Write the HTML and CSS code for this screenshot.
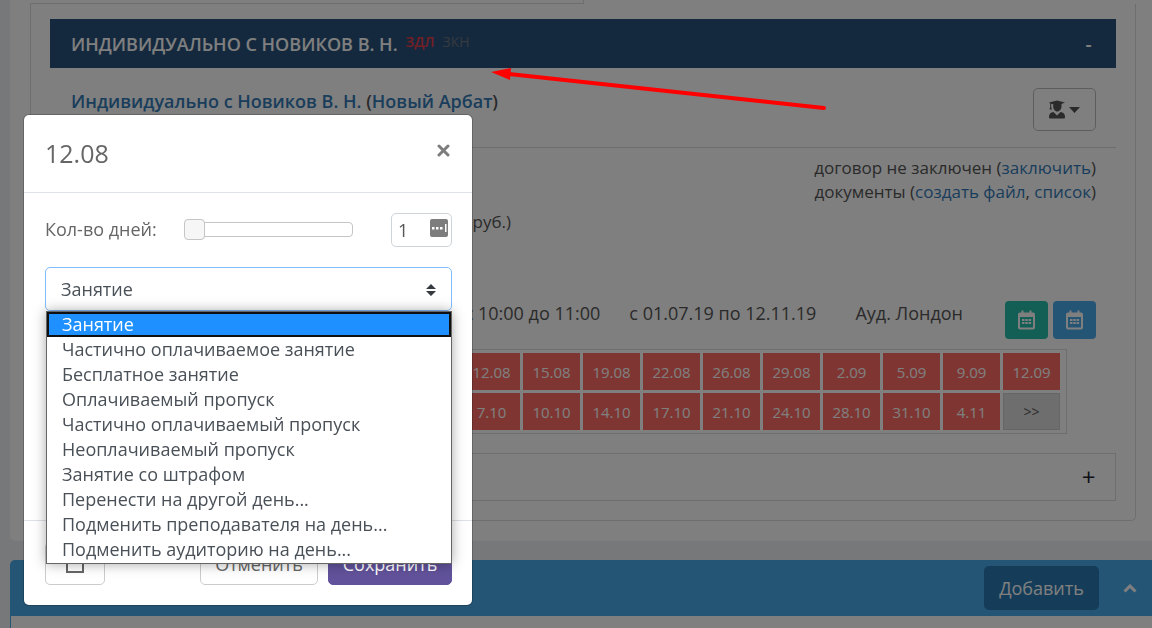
FILE: index.html
```html
<!DOCTYPE html>
<html lang="ru">
<head>
<meta charset="utf-8">
<title>12.08</title>
<link rel="stylesheet" href="styles.css">
</head>
<body>
<main class="sheet">
  <div class="tabs-edge"></div>
  <div class="panel">
    <header class="group-bar">
      <h2 class="group-name">ИНДИВИДУАЛЬНО С НОВИКОВ В. Н.</h2>
      <span class="tag tag-red">ЗДЛ</span>
      <span class="tag tag-gray">ЗКН</span>
      <button class="toggle toggle-light" type="button">-</button>
    </header>
    <section class="group">
      <div class="group-title">
        <h3><a href="#">Индивидуально с Новиков В. Н.</a> (<a href="#">Новый Арбат</a>)</h3>
        <button class="student-btn" type="button" aria-label="Ученик">
          <svg width="16" height="19" viewBox="0 0 16 19"><path d="M8 0.500 L16 2.500 L12.500 4 V6.500 C12.500 9 10.500 11.500 8.300 11.500 C6 11.500 4.200 9 4.200 6.500 V4.200 L2.200 3.700 V7 L2.900 9.500 H.5 L1.200 7 V3.500 L0 2.500 Z M4.500 12 L8 15.500 L11.500 12 C14.500 12.300 16 14.300 16 16.500 V17.500 Q16 18.500 15 18.500 H1 Q0 18.500 0 17.500 V16.500 C0 14.300 1.500 12.300 4.500 12 Z"/></svg>
          <svg width="11" height="6" viewBox="0 0 11 6"><path d="M0 0 H11 L5.500 6 Z"/></svg>
        </button>
      </div>
      <div class="docs">
        <p>договор не заключен (<a href="#">заключить</a>)</p>
        <p>документы (<a href="#">создать файл</a>, <a href="#">список</a>)</p>
      </div>
      <p class="price">руб.)</p>
      <div class="schedule">
        <span>с 10:00 до 11:00</span>
        <span>с 01.07.19 по 12.11.19</span>
        <span class="room">Ауд. Лондон</span>
        <button class="cal cal-green" type="button" aria-label="Календарь группы"><svg width="17" height="20" viewBox="0 0 17 20"><path fill-rule="evenodd" d="M3.500 0.500 H5.500 V2.500 H11.500 V0.500 H13.500 V2.500 H15 Q17 2.500 17 4.500 V17.500 Q17 19.500 15 19.500 H2 Q0 19.500 0 17.500 V4.500 Q0 2.500 2 2.500 H3.500 Z M2 7 V17.500 H15 V7 Z"/><path d="M4 9h2.500v2H4z M7.300 9h2.500v2H7.300z M10.600 9h2.500v2h-2.500z M4 12h2.500v2H4z M7.300 12h2.500v2H7.300z M10.600 12h2.500v2h-2.500z"/></svg></button>
        <button class="cal cal-blue" type="button" aria-label="Календарь ученика"><svg width="17" height="20" viewBox="0 0 17 20"><path fill-rule="evenodd" d="M3.500 0.500 H5.500 V2.500 H11.500 V0.500 H13.500 V2.500 H15 Q17 2.500 17 4.500 V17.500 Q17 19.500 15 19.500 H2 Q0 19.500 0 17.500 V4.500 Q0 2.500 2 2.500 H3.500 Z M2 7 V17.500 H15 V7 Z"/><path d="M4 9h2.500v2H4z M7.300 9h2.500v2H7.300z M10.600 9h2.500v2h-2.500z M4 12h2.500v2H4z M7.300 12h2.500v2H7.300z M10.600 12h2.500v2h-2.500z"/></svg></button>
      </div>
      <table class="dates">
        <tr><td>12.08</td><td>15.08</td><td>19.08</td><td>22.08</td><td>26.08</td><td>29.08</td><td>2.09</td><td>5.09</td><td>9.09</td><td>12.09</td></tr>
        <tr><td>7.10</td><td>10.10</td><td>14.10</td><td>17.10</td><td>21.10</td><td>24.10</td><td>28.10</td><td>31.10</td><td>4.11</td><td class="more">&gt;&gt;</td></tr>
      </table>
    </section>
    <div class="collapsed"><button class="toggle toggle-dark" type="button">+</button></div>
  </div>
</main>
<section class="block">
  <header class="block-head">
    <button class="add" type="button">Добавить</button>
    <button class="fold" type="button" aria-label="Свернуть"><svg width="14" height="9" viewBox="0 0 14 9"><path d="M1.500 7.500 L7 2 L12.500 7.500" fill="none" stroke="currentColor" stroke-width="3"/></svg></button>
  </header>
  <div class="block-body"></div>
</section>

<div class="backdrop"></div>

<svg class="arrow" width="340" height="48" viewBox="0 0 340 48"><path d="M18 6 L333 40" stroke="#f00" stroke-width="4" stroke-linecap="round"/><path d="M0 4 L20 0 L19 12 Z" fill="#f00"/></svg>

<form class="modal" role="dialog" aria-labelledby="modal-title">
  <header class="modal-head">
    <h1 id="modal-title">12.08</h1>
    <button class="close" type="button" aria-label="Закрыть"><svg width="13" height="13" viewBox="0 0 13 13"><path d="M2 2 L11 11 M11 2 L2 11" stroke="currentColor" stroke-width="3" stroke-linecap="round"/></svg></button>
  </header>
  <div class="modal-body">
    <div class="days">
      <label for="days">Кол-во дней:</label>
      <input class="slider" id="days" type="range" min="1" max="30" value="1">
      <div class="count">
        <input type="text" size="1" value="1" aria-label="Кол-во дней, число">
        <svg width="18" height="18" viewBox="0 0 18 18"><rect width="18" height="18" rx="2" fill="#7d7d7d"/><path d="M2 8h2.500v2.500H2z M6 8h2.500v2.500H6z M10 8h2.500v2.500H10z M15 5h1.500v8H15z" fill="#fff"/></svg>
      </div>
    </div>
    <div class="kind">
      <select aria-label="Вид занятия"><option>Занятие</option></select>
      <svg class="sort" width="10" height="12" viewBox="0 0 10 12"><path d="M5 0 L10 5 H0 Z M0 7 H10 L5 12 Z" fill="#343a40"/></svg>
      <ul class="menu" role="listbox">
        <li class="current" role="option" aria-selected="true">Занятие</li>
        <li role="option">Частично оплачиваемое занятие</li>
        <li role="option">Бесплатное занятие</li>
        <li role="option">Оплачиваемый пропуск</li>
        <li role="option">Частично оплачиваемый пропуск</li>
        <li role="option">Неоплачиваемый пропуск</li>
        <li role="option">Занятие со штрафом</li>
        <li role="option">Перенести на другой день...</li>
        <li role="option">Подменить преподавателя на день...</li>
        <li role="option">Подменить аудиторию на день...</li>
      </ul>
    </div>
  </div>
  <footer class="modal-foot">
    <button class="btn trash" type="button" aria-label="Удалить"><svg width="18" height="20" viewBox="0 0 18 20"><path d="M0 3.500 H18 M6 3 V1 H12 V3 M1 4 V18 H17 V4" fill="none" stroke="currentColor" stroke-width="2"/></svg></button>
    <button class="btn cancel" type="button">Отменить</button>
    <button class="btn save" type="submit">Сохранить</button>
  </footer>
</form>
</body>
</html>
```
FILE: styles.css
```css
* { box-sizing: border-box; }
body {
  margin: 0;
  background: #eff1f5;
  color: #555;
  font: 17px/24px "Open Sans", sans-serif;
  overflow: hidden;
}
h1, h2, h3, p, ul { margin: 0; padding: 0; }
a { color: #337ab7; text-decoration: none; }
button, input, select { font: inherit; color: inherit; }
button { padding: 0; border: 0; background: none; }

.sheet {
  margin-left: 10px;
  padding: 0 16px 20px 20px;
  background: #fff;
  border-radius: 0 0 0 5px;
}
.tabs-edge {
  width: 554px;
  height: 4px;
  border: solid #ddd;
  border-width: 0 1px 1px 0;
}
.panel {
  padding: 15px 19px 19px;
  border: solid #ddd;
  border-width: 0 1px 1px;
  border-radius: 0 0 5px 5px;
}
.group-bar {
  display: flex;
  align-items: center;
  gap: 8px;
  height: 49px;
  padding: 0 20px 0 21px;
  background: #28527c;
  color: #fff;
}
.group-name { font-size: 18px; font-weight: 600; }
.tag { font-size: 14px; line-height: 20px; padding-bottom: 4px; }
.tag-red { color: #e73d4a; font-weight: 600; }
.tag-gray { color: #6c757d; }
.toggle { margin-left: auto; width: 15px; font-size: 19px; }
.toggle-light { color: #fff; font-weight: 600; }
.toggle-dark { color: #223; font-size: 24px; }

.group-title {
  display: flex;
  align-items: flex-start;
  justify-content: space-between;
  height: 80px;
  padding: 20px 20px 0 21px;
  border-bottom: 1px solid #ddd;
}
h3 { font-size: 18px; font-weight: 600; line-height: 26px; }
.student-btn {
  display: flex;
  align-items: center;
  justify-content: center;
  gap: 4px;
  width: 63px;
  height: 43px;
  border: 1px solid #bbb;
  border-radius: 5px;
  fill: #555;
}
.docs { padding: 8px 20px 0; text-align: right; }
.price { width: 461px; padding-top: 6px; text-align: right; }
.schedule {
  display: flex;
  justify-content: flex-end;
  gap: 29px;
  padding: 67px 20px 0 0;
  font-size: 18px;
}
.room { margin-left: 10px; margin-right: 13px; }
.cal {
  display: flex;
  align-items: center;
  justify-content: center;
  width: 43px;
  height: 38px;
  border-radius: 4px;
  fill: #fff;
}
.cal-green { background: #26bfac; }
.cal-blue { background: #4aaae9; margin-left: -24px; }
.dates {
  margin: 10px 49px 0 auto;
  padding: 0 3px 0 0;
  border: 1px solid #ddd;
  border-collapse: separate;
  border-spacing: 3px;
}
.dates td {
  width: 57px;
  height: 37px;
  padding: 0;
  background: #fe6c64;
  color: #fff;
  font-size: 15px;
  text-align: center;
}
.dates .more { border: 1px solid #ccc; background: #ddd; color: #555; font-size: 14px; }
.collapsed {
  display: flex;
  align-items: center;
  height: 48px;
  margin-top: 19px;
  padding-right: 19px;
  border: 1px solid #ddd;
}

.block { margin: 19px 0 0 10px; }
.block-head {
  display: flex;
  align-items: center;
  justify-content: flex-end;
  gap: 24px;
  height: 56px;
  padding-right: 15px;
  border-radius: 5px 0 0 0;
  background: #4aaaea;
  color: #fff;
}
.add { width: 115px; height: 44px; border-radius: 5px; background: #2a7ab2; font-size: 18px; }
.fold { display: flex; }
.block-body { height: 40px; border-left: 1px solid #4aaaea; background: #fff; }

.backdrop { position: fixed; inset: 0; background: rgba(0, 0, 0, .5); }
.arrow { position: absolute; left: 491px; top: 68px; }

.modal {
  position: absolute;
  left: 24px;
  top: 115px;
  width: 448px;
  border-radius: 5px;
  background: #fff;
  box-shadow: 0 0 0 1px rgba(0, 0, 0, .2);
}
.modal-head {
  display: flex;
  justify-content: space-between;
  align-items: flex-start;
  padding: 21px;
  border-bottom: 1px solid #dee2e6;
}
h1 { font-size: 25px; line-height: 35px; font-weight: 400; color: #666; }
.close { display: flex; padding: 8px 1px 0 0; color: #7d7d7d; }
.modal-body { min-height: 327px; padding: 20px 20px 20px 21px; }
.days { display: flex; align-items: center; margin-bottom: 20px; }
.days label { flex: 0 0 139px; padding-bottom: 3px; color: #666; font-size: 18px; }
.slider {
  appearance: none;
  flex: 0 0 169px;
  width: 169px;
  height: 15px;
  margin: 0 38px 1px 0;
  border: 1px solid #c5c5c5;
  border-radius: 4px;
  background: #fff;
}
.slider::-webkit-slider-thumb {
  appearance: none;
  width: 21px;
  height: 21px;
  margin-left: -1px;
  border: 1px solid #c5c5c5;
  border-radius: 4px;
  background: #f6f6f6;
}
.count {
  display: flex;
  align-items: center;
  gap: 4px;
  flex: 1;
  min-width: 0;
  height: 34px;
  padding: 0 3px 0 6px;
  border: 1px solid #ced4da;
  border-radius: 5px;
}
.count input { flex: 1; width: 20px; min-width: 0; padding: 0; border: 0; background: none; font-size: 18px; }
.count svg { flex: none; margin-bottom: 4px; }
.kind { position: relative; }
.kind select {
  display: block;
  appearance: none;
  width: 100%;
  height: 44px;
  padding: 0 15px;
  border: 1px solid #80bdff;
  border-radius: 5px;
  background: #fff;
  color: #495057;
  font-size: 18px;
}
.sort { position: absolute; right: 16px; top: 17px; }
.menu {
  position: absolute;
  left: 1px;
  right: 0;
  top: 44px;
  padding-bottom: 1px;
  border: 1px solid #666;
  background: #fff;
  box-shadow: 0 0 12px rgba(0, 0, 0, .35);
  color: #495057;
  font-size: 18px;
  list-style: none;
}
.menu li { height: 25px; padding-left: 15px; line-height: 25px; }
.menu .current {
  border: 2px solid #101010;
  padding-left: 13px;
  line-height: 20px;
  background: #1e90ff;
  color: #fff;
}
.modal-foot {
  display: flex;
  gap: 10px;
  padding: 21px 20px 20px 21px;
  border-top: 1px solid #dee2e6;
}
.btn { height: 43px; border: 1px solid #ccc; border-radius: 5px; background: #fff; color: #666; font-size: 18px; }
.trash { width: 60px; margin-right: auto; }
.trash svg { display: block; margin: 0 auto; }
.cancel { width: 118px; }
.save { width: 124px; border-color: #61529b; background: #61529b; color: #fff; }
```
